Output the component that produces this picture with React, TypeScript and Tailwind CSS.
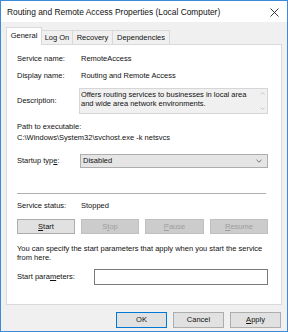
import React from "react";

const U = ({ children }: { children: React.ReactNode }) => (
  <span className="underline underline-offset-[1px] decoration-[0.5px]">{children}</span>
);

function Btn({
  children,
  disabled,
  w,
  primary,
}: {
  children: React.ReactNode;
  disabled?: boolean;
  w: string;
  primary?: boolean;
}) {
  return (
    <div
      className={
        "flex items-center justify-center h-full " +
        w +
        " " +
        (disabled
          ? "bg-[#cccccc] border border-[#bfbfbf] text-[#9d9d9d]"
          : primary
          ? "bg-[#e1e1e1] border border-[#0078d7] text-[#111]"
          : "bg-[#e1e1e1] border border-[#adadad] text-[#111]")
      }
    >
      {children}
    </div>
  );
}

export default function App() {
  return (
    <div
      className="w-[288px] h-[332px] border border-[#3c8ad8] flex flex-col bg-[#f0f0f0] text-[#111] overflow-hidden"
      style={{ fontFamily: '"Liberation Sans", Arial, sans-serif' }}
    >
      {/* Title bar */}
      <div className="h-[21px] bg-white flex items-center justify-between pl-[6px] pr-[6px] pt-[2px] text-[8.4px] shrink-0">
        <span className="text-[#111]">Routing and Remote Access Properties (Local Computer)</span>
        <svg width="9" height="9" viewBox="0 0 9 9" className="mr-[2px]">
          <path d="M0.5 0.5 L8.5 8.5 M8.5 0.5 L0.5 8.5" stroke="#222" strokeWidth="0.9" />
        </svg>
      </div>

      {/* Body */}
      <div className="flex-1 flex flex-col px-[5px] text-[7.5px]">
        {/* Tabs */}
        <div className="flex items-end h-[22px] shrink-0">
          <div className="relative z-10 h-[18px] w-[36px] bg-white border border-b-0 border-[#d9d9d9] flex items-center justify-center mb-[-1px] pb-[1px]">
            General
          </div>
          <div className="h-[14px] w-[31px] bg-[#f0f0f0] border border-l-0 border-b-0 border-[#d9d9d9] flex items-center justify-center">
            Log On
          </div>
          <div className="h-[14px] w-[40px] bg-[#f0f0f0] border border-l-0 border-b-0 border-[#d9d9d9] flex items-center justify-center">
            Recovery
          </div>
          <div className="h-[14px] w-[57px] bg-[#f0f0f0] border border-l-0 border-b-0 border-[#d9d9d9] flex items-center justify-center">
            Dependencies
          </div>
        </div>

        {/* Panel */}
        <div className="h-[261px] bg-white border border-[#d9d9d9] flex flex-col pl-[10px] pr-[13px] shrink-0">
          <div className="mt-[8px] h-[12px] flex items-center">
            <span className="w-[64px]">Service name:</span>
            <span>RemoteAccess</span>
          </div>
          <div className="mt-[5px] h-[12px] flex items-center">
            <span className="w-[64px]">Display name:</span>
            <span>Routing and Remote Access</span>
          </div>
          <div className="mt-[6px] h-[26px] flex items-center">
            <span className="w-[62px]">Description:</span>
            <div className="flex-1 h-full bg-[#f0f0f0] border border-[#d6d6d6] flex">
              <div className="flex-1 pl-[1px] pt-[1px] leading-[9px]">
                Offers routing services to businesses in local area and wide area network environments.
              </div>
              <div className="w-[9px] flex flex-col items-center justify-between py-[3px]">
                <svg width="5" height="3" viewBox="0 0 5 3">
                  <path d="M0.5 2.5 L2.5 0.5 L4.5 2.5" stroke="#b5b5b5" strokeWidth="0.7" fill="none" />
                </svg>
                <svg width="5" height="3" viewBox="0 0 5 3">
                  <path d="M0.5 0.5 L2.5 2.5 L4.5 0.5" stroke="#b5b5b5" strokeWidth="0.7" fill="none" />
                </svg>
              </div>
            </div>
          </div>
          <div className="mt-[7px] h-[11px] flex items-center">Path to executable:</div>
          <div className="h-[12px] flex items-center">C:\Windows\System32\svchost.exe -k netsvcs</div>
          <div className="mt-[10px] h-[14px] flex items-center">
            <span className="w-[63px]">
              Startup typ<U>e</U>:
            </span>
            <div className="flex-1 h-full bg-[#e5e5e5] border border-[#adadad] flex items-center justify-between pl-[2px] pr-[5px]">
              <span>Disabled</span>
              <svg width="6" height="4" viewBox="0 0 6 4">
                <path d="M0.5 0.8 L3 3.2 L5.5 0.8" stroke="#444" strokeWidth="0.7" fill="none" />
              </svg>
            </div>
          </div>
          <div className="mt-[25px] h-[1px] bg-[#b0b0b0] mr-[2px]" />
          <div className="mt-[6px] h-[12px] flex items-center">
            <span className="w-[64px]">Service status:</span>
            <span>Stopped</span>
          </div>
          <div className="mt-[7px] h-[15px] flex justify-between">
            <Btn w="w-[58px]">
              <U>S</U>tart
            </Btn>
            <Btn w="w-[58px]" disabled>
              S<U>t</U>op
            </Btn>
            <Btn w="w-[59px]" disabled>
              <U>P</U>ause
            </Btn>
            <Btn w="w-[58px]" disabled>
              <U>R</U>esume
            </Btn>
          </div>
          <div className="mt-[10px] leading-[9px]">
            You can specify the start parameters that apply when you start the service from here.
          </div>
          <div className="mt-[7px] h-[16px] flex items-center">
            <span className="w-[77px]">
              Start para<U>m</U>eters:
            </span>
            <div className="flex-1 h-full bg-white border border-[#7a7a7a]" />
          </div>
        </div>

        {/* Dialog buttons */}
        <div className="mt-[7px] h-[16px] flex justify-end gap-[6px] pr-[1px]">
          <Btn w="w-[51px]" primary>
            OK
          </Btn>
          <Btn w="w-[51px]">Cancel</Btn>
          <Btn w="w-[51px]">
            <U>A</U>pply
          </Btn>
        </div>
      </div>
    </div>
  );
}
